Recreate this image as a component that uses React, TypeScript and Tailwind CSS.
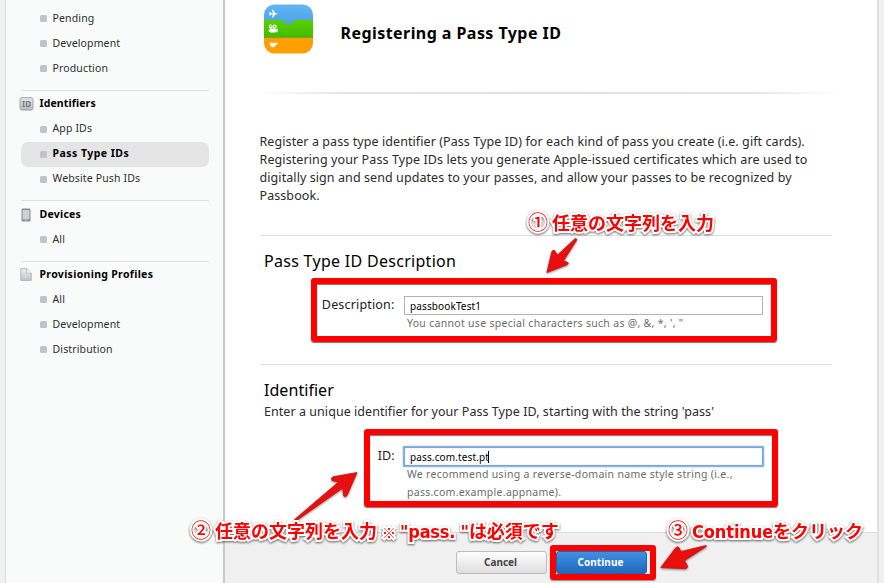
import type { ReactNode } from "react";

function Item({ label, active = false }: { label: string; active?: boolean }) {
  return (
    <li
      className={
        active
          ? "ml-[15px] flex h-[25px] w-[188px] items-center rounded-[7px] bg-[#e5e5e5] pl-[19px] text-[10.5px] font-bold tracking-[0.47px] text-black"
          : "ml-[15px] flex h-[25px] w-[188px] items-center pl-[19px] text-[10.5px] tracking-[0.14px] text-[#2e2e2e]"
      }
    >
      <span className="mr-[5.5px] h-[7px] w-[7px] rounded-[1.5px] bg-[#c2c3c7]" />
      {label}
    </li>
  );
}

function Group({ icon, title, children }: { icon: ReactNode; title: ReactNode; children: ReactNode }) {
  return (
    <section>
      <h3 className="flex h-[25px] items-center pl-[12.5px] text-[10.5px] font-bold text-black">
        <span className="mr-[6px] flex w-[15px] justify-center">{icon}</span>
        {title}
      </h3>
      <ul>{children}</ul>
    </section>
  );
}

function Divider() {
  return <div className="ml-[15px] h-px w-[188px] bg-[#e0e2e2]" />;
}

function IdIcon() {
  return (
    <svg width="15" height="14" viewBox="0 0 15 14">
      <defs>
        <linearGradient id="idg" x1="0" y1="0" x2="0" y2="1">
          <stop offset="0" stopColor="#e6e6e8" />
          <stop offset="1" stopColor="#b9babd" />
        </linearGradient>
      </defs>
      <rect x="1" y="0.7" width="13" height="12.4" rx="2" fill="url(#idg)" stroke="#a3a4a8" />
      <text x="7.5" y="9.8" textAnchor="middle" fontSize="8" fontWeight="700" fill="#77787d" fontFamily="Noto Sans, sans-serif">
        ID
      </text>
    </svg>
  );
}

function DeviceIcon() {
  return (
    <svg width="10" height="14" viewBox="0 0 10 14">
      <rect x="0.5" y="0.5" width="9" height="13" rx="1.2" fill="#8a8b90" />
      <rect x="1.6" y="2" width="6.8" height="9.4" fill="#d0d1d4" />
      <rect x="4" y="12" width="2" height="1" fill="#bbb" />
    </svg>
  );
}

function FileIcon() {
  return (
    <svg width="12" height="13" viewBox="0 0 12 13">
      <defs>
        <linearGradient id="fg" x1="0" y1="0" x2="0" y2="1">
          <stop offset="0" stopColor="#efeff0" />
          <stop offset="1" stopColor="#c3c4c7" />
        </linearGradient>
      </defs>
      <path d="M0.8 0.7H6.8L11.2 5V12.4H0.8Z" fill="url(#fg)" stroke="#adaeb1" strokeWidth="0.9" />
      <path d="M6.6 0.7V5.2H11.2" fill="#fafafa" stroke="#b5b6b9" strokeWidth="0.8" />
    </svg>
  );
}

function PassbookIcon() {
  return (
    <svg width="49" height="50" viewBox="0 0 49 50" className="shrink-0">
      <defs>
        <clipPath id="pb">
          <rect width="49" height="49" y="0.5" rx="10.5" />
        </clipPath>
        <linearGradient id="pblue" x1="0" y1="0" x2="0" y2="1">
          <stop offset="0" stopColor="#62b6f7" />
          <stop offset="1" stopColor="#4a9cd9" />
        </linearGradient>
        <linearGradient id="pgreen" x1="0" y1="0" x2="0" y2="1">
          <stop offset="0" stopColor="#59d000" />
          <stop offset="1" stopColor="#43b900" />
        </linearGradient>
      </defs>
      <g clipPath="url(#pb)">
        <rect width="49" height="26" fill="url(#pblue)" />
        <path d="M0 16H18.5C19.5 16 19.7 16.8 20.3 18A5 5 0 0 0 28.9 18C29.5 16.8 29.7 16 30.7 16H49V34H0Z" fill="url(#pgreen)" />
        <rect y="33.5" width="49" height="17" fill="#ff9f00" />
        <path d="M0 33.5H49" stroke="#3da800" strokeWidth="1" strokeDasharray="1 1" />
        <path d="M5 8L6.2 8L7.2 8.9H9L7.7 5.8H9.1L11.2 8.9H12.6Q14.2 9.7 12.6 10.5H11.2L9.1 13.6H7.7L9 10.5H7.2L6.2 11.4H5L5.6 9.7Z" fill="#fff" />
        <g transform="translate(0 -3.6)">
          <g fill="none" stroke="#fff" strokeWidth="1.2">
            <circle cx="6.7" cy="26" r="1.4" />
            <circle cx="10.7" cy="26" r="1.4" />
          </g>
          <path d="M6 28H11.8V29.2L13.6 28.1V32L11.8 30.9V32H6V31L4.8 31.5V29L6 29.2Z" fill="#fff" />
        </g>
        <path d="M5.6 38.8H12.2Q13.8 38.8 13.5 39.9Q13.1 41 11.8 41Q11 43 9.6 43.2H8.2Q6 42.5 5.6 38.8Z" fill="#fff" />
      </g>
    </svg>
  );
}

const noteText =
  "absolute whitespace-pre font-['DejaVu_Sans','Noto_Sans_CJK_JP',sans-serif] font-stretch-condensed text-[18px] leading-[26px] font-bold text-[#fe0000] [paint-order:stroke] [-webkit-text-stroke:4px_#fff] drop-shadow-[0_1px_1px_rgba(0,0,0,0.6)]";
const jp = "font-['Noto_Sans_CJK_JP',sans-serif]";
const num = "mr-[4px] inline-block w-[20px] font-['Noto_Sans_CJK_JP',sans-serif] text-[20px] font-medium";

export default function App() {
  return (
    <div className="relative flex h-[583px] w-[884px] overflow-hidden bg-[#f0f0f0] font-['Noto_Sans',sans-serif]">
      <aside className="ml-[5px] w-[220px] shrink-0 border-r-2 border-l border-l-[#dcdddd] border-r-[#c8c9c9] bg-[#f9fbfa] pt-[6px]">
        <ul>
          <Item label="Pending" />
          <Item label="Development" />
          <Item label="Production" />
        </ul>
        <div className="h-[9px]" />
        <Divider />
        <div className="h-[0.5px]" />
        <Group icon={<IdIcon />} title={<span className="tracking-[0.12px]">Identifiers</span>}>
          <Item label="App IDs" />
          <Item label="Pass Type IDs" active />
          <Item label="Website Push IDs" />
        </Group>
        <div className="h-[8.5px]" />
        <Divider />
        <div className="h-px" />
        <Group icon={<DeviceIcon />} title={<span className="tracking-[0.25px]">Devices</span>}>
          <Item label="All" />
        </Group>
        <div className="h-[9px]" />
        <Divider />
        <Group icon={<FileIcon />} title={<span className="tracking-[0.32px]">Provisioning Profiles</span>}>
          <Item label="All" />
          <Item label="Development" />
          <Item label="Distribution" />
        </Group>
      </aside>

      <main className="flex w-[654px] shrink-0 flex-col border-r-2 border-[#e0e0e0] bg-white">
        <header className="flex h-[92px] items-start pt-1 pl-[39px]">
          <PassbookIcon />
          <h1 className="ml-[27.5px] pt-[17px] text-[16px] leading-[24px] font-bold tracking-[0.44px] text-black">
            Registering a Pass Type ID
          </h1>
        </header>
        <div className="ml-[32px] h-[2px] w-[583px] bg-[linear-gradient(to_right,transparent,#e4e4e4_15%,#dfdfdf_50%,#e4e4e4_85%,transparent)]" />

        <div className="mt-[39px] h-[102px] pl-[34.5px] text-[12.5px] leading-[18px] whitespace-nowrap text-[#2b2b2b]">
          <p className="tracking-[0.08px]">Register a pass type identifier (Pass Type ID) for each kind of pass you create (i.e. gift cards).</p>
          <p className="tracking-[0.1px]">Registering your Pass Type IDs lets you generate Apple-issued certificates which are used to</p>
          <p className="tracking-[0.08px]">digitally sign and send updates to your passes, and allow your passes to be recognized by</p>
          <p className="tracking-[0.08px]">Passbook.</p>
        </div>

        <section className="ml-[35px] h-[129px] w-[572px] border-t border-[#dedede] pt-[13px]">
          <h2 className="pl-1 text-[16px] leading-[24px] tracking-[0.29px] text-black">Pass Type ID Description</h2>
          <div className="mt-[23px] flex">
            <label className="w-[144px] pr-[9.5px] text-right text-[12.5px] leading-[18px] tracking-[0.17px] text-[#222]">Description:</label>
            <div>
              <div className="flex h-[19px] w-[359px] items-center border border-[#b3b3b3] bg-white pt-px pl-[5px] text-[10px] tracking-[0.12px] text-black">
                passbookTest1
              </div>
              <p className="-mt-px pl-[3px] text-[10.5px] leading-[18px] tracking-[0.3px] whitespace-nowrap text-[#6b6b6b]">
                {"You cannot use special characters such as @, &, *, ', \""}
              </p>
            </div>
          </div>
        </section>

        <section className="ml-[35px] h-[168px] w-[572px] border-t border-[#dedede] pt-[13px]">
          <h2 className="pl-1 text-[16px] leading-[24px] tracking-[0.05px] text-black">Identifier</h2>
          <p className="mt-px pl-1 text-[12.5px] leading-[18px] tracking-[0.05px] text-[#2b2b2b]">
            Enter a unique identifier for your Pass Type ID, starting with the string 'pass'
          </p>
          <div className="mt-[26px] flex">
            <label className="w-[144px] pr-[9.5px] text-right text-[12.5px] leading-[18px] text-[#222]">ID:</label>
            <div>
              <div className="flex h-[19px] w-[359px] items-center border border-[#7aa5dc] bg-white pt-px pl-[5px] text-[10px] tracking-[0.13px] text-black shadow-[0_0_0_1px_#8db4e4,0_0_2px_1px_#a9c8ee,inset_0_0_1px_#8db4e4]">
                pass.com.test.pt
                <span className="-ml-px h-[12px] w-px bg-black" />
              </div>
              <div className="-mt-px pl-[3px] text-[10.5px] leading-[18px] whitespace-nowrap text-[#6b6b6b]">
                <p className="tracking-[0.3px]">We recommend using a reverse-domain name style string (i.e.,</p>
                <p className="tracking-[0.28px]">pass.com.example.appname).</p>
              </div>
            </div>
          </div>
        </section>

        <footer className="flex flex-1 items-start gap-[9px] border-t border-[#dcdcdc] bg-[#f0f0f0] pt-[18px] pl-[231px]">
          <button className="h-[23px] w-[91px] rounded-[3px] border border-[#bcbcbc] bg-linear-to-b from-[#fdfdfd] to-[#dedede] pr-[2px] text-[10px] font-bold text-[#444]">
            Cancel
          </button>
          <button className="h-[23px] w-[91px] rounded-[3px] border border-[#1f62b0] bg-linear-to-b from-[#3f90e4] to-[#2169bd] pr-[2px] text-[10px] font-bold tracking-[0.07px] text-white">
            Continue
          </button>
        </footer>
      </main>

      <div className="absolute top-[278px] left-[311px] h-[64px] w-[466px] rounded-[3px] border-6 border-[#fe0000] shadow-[0_1px_1px_rgba(0,0,0,0.55),inset_0_1px_1px_rgba(0,0,0,0.55)]" />
      <div className="absolute top-[429px] left-[364px] h-[78px] w-[414px] rounded-[3px] border-6 border-[#fe0000] shadow-[0_1px_1px_rgba(0,0,0,0.55),inset_0_1px_1px_rgba(0,0,0,0.55)]" />
      <div className="absolute top-[545px] left-[550px] h-[35px] w-[106px] rounded-[3px] border-6 border-[#fe0000] shadow-[0_1px_1px_rgba(0,0,0,0.4)]" />

      <svg className="absolute top-0 left-0 drop-shadow-[0_1px_1px_rgba(0,0,0,0.5)]" width="884" height="583" viewBox="0 0 884 583">
        <g fill="#ea0f0f" stroke="#d40a0a" strokeWidth="0.8" strokeLinejoin="round">
          <path d="M575.5 238.3L557.5 255L554.5 250.5Q552.5 249.5 551.8 252L546.9 272.5L567.5 264.5Q569.5 262.5 566.8 262L563.5 260.8L577 239.5Z" />
          <path d="M294.6 519.5L338.5 482L332 480.5Q330.5 478 333 476.8L357 472.5L347 495.5Q345 497.8 343.5 495.5L342.8 488L296.2 520.7Z" />
          <path d="M706 545.5L681 551.5L679 547.5Q677.5 546 675.5 548L660.8 567.5L686 568.7Q688.3 567.5 687.2 565.2L684.5 560.5L706.5 546.3Z" />
        </g>
      </svg>

      <div className={`${noteText} top-[209px] left-[528px]`}>
        <span className={num}>①</span>
        <span className={jp}>任意の文字列を入力</span>
      </div>
      <div className={`${noteText} top-[517px] left-[191px]`}>
        <span className={num}>②</span>
        <span className={jp}>任意の文字列を入力</span>
        <span className="mr-[4px] ml-[5px] inline-block w-[14px] font-['Noto_Sans_CJK_JP',sans-serif] text-[14px]">※</span>
        <span className="tracking-[-0.2px]">"pass. "</span>
        <span className={jp}>は必須です</span>
      </div>
      <div className={`${noteText} top-[517px] left-[668px]`}>
        <span className={num}>③</span>
        <span className="tracking-[-0.1px]">Continue</span>
        <span className={jp}>をクリック</span>
      </div>
    </div>
  );
}
